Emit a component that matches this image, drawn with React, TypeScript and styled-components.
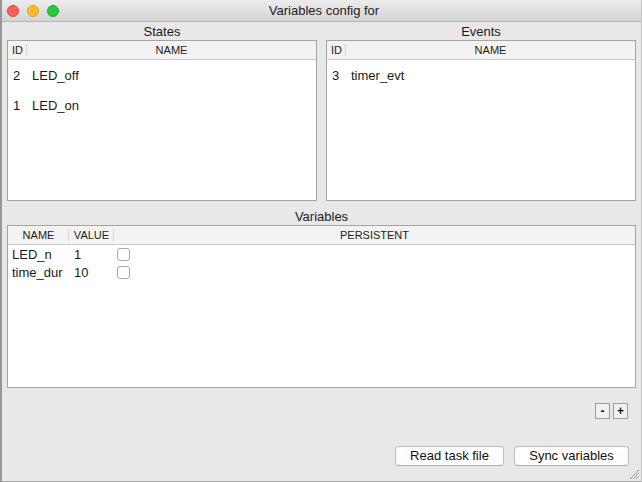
import React from "react";
import styled, { createGlobalStyle } from "styled-components";

const Global = createGlobalStyle`
  html, body { margin: 0; padding: 0; background: #e8e8e8; }
  body { font-family: "Liberation Sans", Arial, sans-serif; color: #1a1a1a; }
  * { box-sizing: border-box; }
`;

const Window = styled.div`
  width: 642px;
  height: 482px;
  display: flex;
  flex-direction: column;
  background: #e8e8e8;
  border-left: 2px solid #979797;
  border-right: 1px solid #c4c4c4;
  border-bottom: 1px solid #a8a8a8;
  position: relative;
  overflow: hidden;
`;

const TitleBar = styled.div`
  height: 22px;
  flex: none;
  display: grid;
  grid-template-columns: 1fr auto 1fr;
  align-items: center;
  padding-left: 5px;
  background: linear-gradient(#ececec, #d4d4d4);
  border-bottom: 1px solid #b4b4b4;
`;

const Lights = styled.div`
  display: flex;
  gap: 8px;
`;

const Light = styled.span<{ $c: string; $b: string }>`
  width: 12px;
  height: 12px;
  border-radius: 50%;
  background: ${(p) => p.$c};
  border: 1px solid ${(p) => p.$b};
`;

const Title = styled.div`
  font-size: 13px;
  color: #222;
  line-height: 16px;
`;

const Content = styled.div`
  flex: 1;
  display: flex;
  flex-direction: column;
  padding: 2px 5px 0 5px;
`;

const TopRow = styled.div`
  display: grid;
  grid-template-columns: 1fr 1fr;
  column-gap: 9px;
`;

const Section = styled.div<{ $mt?: number }>`
  display: flex;
  flex-direction: column;
  margin-top: ${(p) => p.$mt ?? 0}px;
`;

const Label = styled.div`
  height: 16px;
  line-height: 16px;
  font-size: 13px;
  text-align: center;
  color: #1a1a1a;
`;

const TableBox = styled.div<{ $h: number }>`
  height: ${(p) => p.$h}px;
  background: #ffffff;
  border: 1px solid #a4a4a4;
  display: flex;
  flex-direction: column;
`;

const HeaderRow = styled.div<{ $cols: string }>`
  height: 19px;
  flex: none;
  display: grid;
  grid-template-columns: ${(p) => p.$cols};
  background: #f3f3f3;
  border-bottom: 1px solid #c9c9c9;
`;

const HeadCell = styled.div<{ $sep?: boolean }>`
  position: relative;
  font-size: 11px;
  line-height: 18px;
  text-align: center;
  color: #1c1c1c;
  &::after {
    content: "";
    display: ${(p) => (p.$sep ? "block" : "none")};
    position: absolute;
    right: 0;
    top: 3px;
    bottom: 3px;
    width: 1px;
    background: #d6d6d6;
  }
`;

const Row = styled.div<{ $cols: string; $h: number }>`
  display: grid;
  grid-template-columns: ${(p) => p.$cols};
  height: ${(p) => p.$h}px;
  align-items: center;
  font-size: 13px;
`;

const Cell = styled.div<{ $pl?: number }>`
  padding-left: ${(p) => p.$pl ?? 0}px;
  white-space: nowrap;
`;

const Check = styled.span`
  display: block;
  width: 13px;
  height: 13px;
  margin-left: 3px;
  border: 1px solid #a9a9a9;
  border-radius: 3px;
  background: #fff;
`;

const SmallRow = styled.div`
  display: flex;
  justify-content: flex-end;
  gap: 3px;
  margin-top: 15px;
  padding-right: 8px;
`;

const SmallBtn = styled.button`
  width: 15px;
  height: 16px;
  padding: 0;
  border: 1px solid #9c9c9c;
  background: #f1f1f1;
  font-family: "Liberation Sans", Arial, sans-serif;
  font-size: 12px;
  font-weight: bold;
  line-height: 13px;
  color: #111;
`;

const ButtonRow = styled.div`
  display: flex;
  justify-content: flex-end;
  gap: 10px;
  margin-top: 27px;
  padding-right: 7px;
`;

const PushBtn = styled.button<{ $w: number }>`
  width: ${(p) => p.$w}px;
  height: 20px;
  padding: 0;
  border: 1px solid #bdbdbd;
  border-bottom-color: #a9a9a9;
  border-radius: 4px;
  background: #ffffff;
  font-family: "Liberation Sans", Arial, sans-serif;
  font-size: 13px;
  color: #111;
  line-height: 18px;
`;

const Grip = styled.svg`
  position: absolute;
  right: 1px;
  bottom: 1px;
`;

const idCols = "19px 1fr";
const varCols = "61px 45px 1fr";

export default function App() {
  return (
    <>
      <Global />
      <Window>
        <TitleBar>
          <Lights>
            <Light $c="#fc5f57" $b="#e0443e" />
            <Light $c="#fdbc2e" $b="#dea123" />
            <Light $c="#28c840" $b="#1aab29" />
          </Lights>
          <Title>Variables config for</Title>
          <div />
        </TitleBar>
        <Content>
          <TopRow>
            <Section>
              <Label>States</Label>
              <TableBox $h={161}>
                <HeaderRow $cols={idCols}>
                  <HeadCell $sep>ID</HeadCell>
                  <HeadCell>NAME</HeadCell>
                </HeaderRow>
                <Row $cols={idCols} $h={30}>
                  <Cell $pl={5}>2</Cell>
                  <Cell $pl={5}>LED_off</Cell>
                </Row>
                <Row $cols={idCols} $h={30}>
                  <Cell $pl={5}>1</Cell>
                  <Cell $pl={5}>LED_on</Cell>
                </Row>
              </TableBox>
            </Section>
            <Section>
              <Label>Events</Label>
              <TableBox $h={161}>
                <HeaderRow $cols={idCols}>
                  <HeadCell $sep>ID</HeadCell>
                  <HeadCell>NAME</HeadCell>
                </HeaderRow>
                <Row $cols={idCols} $h={30}>
                  <Cell $pl={5}>3</Cell>
                  <Cell $pl={5}>timer_evt</Cell>
                </Row>
              </TableBox>
            </Section>
          </TopRow>
          <Section $mt={8}>
            <Label>Variables</Label>
            <TableBox $h={163}>
              <HeaderRow $cols={varCols}>
                <HeadCell $sep>NAME</HeadCell>
                <HeadCell $sep>VALUE</HeadCell>
                <HeadCell>PERSISTENT</HeadCell>
              </HeaderRow>
              <Row $cols={varCols} $h={18}>
                <Cell $pl={4}>LED_n</Cell>
                <Cell $pl={5}>1</Cell>
                <Cell><Check /></Cell>
              </Row>
              <Row $cols={varCols} $h={18}>
                <Cell $pl={4}>time_dur</Cell>
                <Cell $pl={5}>10</Cell>
                <Cell><Check /></Cell>
              </Row>
            </TableBox>
          </Section>
          <SmallRow>
            <SmallBtn>-</SmallBtn>
            <SmallBtn>+</SmallBtn>
          </SmallRow>
          <ButtonRow>
            <PushBtn $w={109}>Read task file</PushBtn>
            <PushBtn $w={115}>Sync variables</PushBtn>
          </ButtonRow>
        </Content>
        <Grip width="11" height="11" viewBox="0 0 11 11">
          <line x1="1" y1="10" x2="10" y2="1" stroke="#9a9a9a" strokeWidth="1" />
          <line x1="4" y1="10" x2="10" y2="4" stroke="#9a9a9a" strokeWidth="1" />
          <line x1="7" y1="10" x2="10" y2="7" stroke="#9a9a9a" strokeWidth="1" />
        </Grip>
      </Window>
    </>
  );
}
